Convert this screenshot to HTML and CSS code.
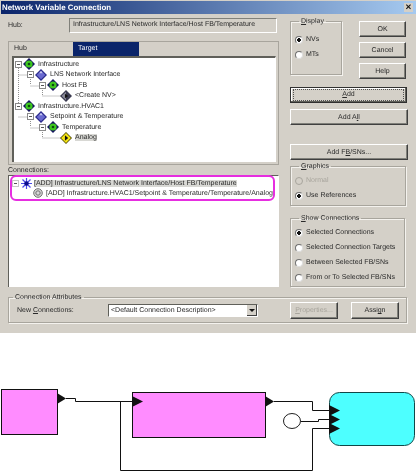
FILE: index.html
```html
<!doctype html>
<html lang="en">
<head>
    <title>Network Variable Connection</title>
    <meta charset="utf-8" />
    <link rel="stylesheet" href="styles.css">
</head>
<body>
    <!-- Shared tree icons -->
    <svg class="icon-defs" width="0" height="0">
        <symbol id="node-green" viewBox="0 0 11 11">
            <polygon points="5.5,0 11,5.5 5.5,11 0,5.5" fill="#14145e" />
            <circle cx="5.5" cy="5.5" r="3.3" fill="#3ec81e" />
            <circle cx="5.5" cy="5.5" r="1.2" fill="#0c4a10" />
        </symbol>
        <symbol id="node-blue" viewBox="0 0 11 11">
            <polygon points="5.5,0 11,5.5 5.5,11 0,5.5" fill="#2a2a8c" />
            <polygon points="5.5,1.5 9.5,5.5 5.5,9.5 1.5,5.5" fill="#6a6ad0" />
            <polygon points="5.5,1.5 7,4 4,4" fill="#c8c8f0" />
        </symbol>
        <symbol id="node-gray" viewBox="0 0 11 11">
            <polygon points="5.5,0 11,5.5 5.5,11 0,5.5" fill="#3a3a50" />
            <polygon points="1.5,5.5 5.5,1.5 5.5,9.5" fill="#8a8a9a" />
            <polygon points="4.5,3.5 7.5,5.5 4.5,7.5" fill="#111" />
        </symbol>
        <symbol id="node-yellow" viewBox="0 0 11 11">
            <polygon points="5.5,0 11,5.5 5.5,11 0,5.5" fill="#4a4400" />
            <polygon points="5.5,1 10,5.5 5.5,10 1,5.5" fill="#f4e414" />
            <polygon points="4.5,3 7.5,5.5 4.5,8" fill="#111" />
        </symbol>
    </svg>

    <!-- Dialog -->
    <div class="dialog">
        <div class="titlebar">
            <span class="title">Network Variable Connection</span>
            <span class="close">&#215;</span>
        </div>

        <div class="main">
            <div class="left">
                <div class="hub-row">
                    <span class="hub-label">Hub:</span>
                    <div class="hub-field">Infrastructure/LNS Network Interface/Host FB/Temperature</div>
                </div>

                <div class="pane">
                    <div class="tabs">
                        <div class="tab">Hub</div>
                        <div class="tab tab-active">Target</div>
                    </div>
                    <div class="tree">
                        <svg class="tree-lines" width="260" height="100">
                            <path d="M4.5 5V47M4.5 16H13M16.5 16V26M16.5 27H25M28.5 27V37H47M4.5 58H13M16.5 58V68M16.5 69H25M28.5 69V79H47" />
                        </svg>
                        <div class="row lvl0"><span class="toggle"></span><svg class="node"><use href="#node-green" /></svg><span>Infrastructure</span></div>
                        <div class="row lvl1"><span class="toggle"></span><svg class="node"><use href="#node-blue" /></svg><span>LNS Network Interface</span></div>
                        <div class="row lvl2"><span class="toggle"></span><svg class="node"><use href="#node-green" /></svg><span>Host FB</span></div>
                        <div class="row lvl3"><svg class="node"><use href="#node-gray" /></svg><span>&lt;Create NV&gt;</span></div>
                        <div class="row lvl0"><span class="toggle"></span><svg class="node"><use href="#node-green" /></svg><span>Infrastructure.HVAC1</span></div>
                        <div class="row lvl1"><span class="toggle"></span><svg class="node"><use href="#node-blue" /></svg><span>Setpoint &amp; Temperature</span></div>
                        <div class="row lvl2"><span class="toggle"></span><svg class="node"><use href="#node-green" /></svg><span>Temperature</span></div>
                        <div class="row lvl3"><svg class="node"><use href="#node-yellow" /></svg><span class="picked">Analog</span></div>
                    </div>
                </div>

                <div class="conn-label">Connections:</div>
                <div class="conn-list">
                    <div class="conn-mark">
                        <div class="conn-row">
                            <span class="toggle toggle-faint"></span>
                            <svg class="star" width="11" height="11" viewBox="0 0 11 11">
                                <path d="M5.5 0V11M0 5.5H11M1.5 1.5L9.5 9.5M9.5 1.5L1.5 9.5" />
                                <circle cx="5.5" cy="5.5" r="2.2" />
                            </svg>
                            <span class="picked">[ADD] Infrastructure/LNS Network Interface/Host FB/Temperature</span>
                        </div>
                        <div class="conn-row conn-target">
                            <svg class="target" width="10" height="10" viewBox="0 0 10 10">
                                <circle cx="5" cy="5" r="4.3" />
                                <circle cx="5" cy="5" r="2.2" />
                            </svg>
                            <span>[ADD] Infrastructure.HVAC1/Setpoint &amp; Temperature/Temperature/Analog</span>
                        </div>
                    </div>
                </div>
            </div>

            <div class="right">
                <div class="top-row">
                    <fieldset class="group group-display">
                        <legend><u>D</u>isplay</legend>
                        <div class="radio on">NVs</div>
                        <div class="radio">MTs</div>
                    </fieldset>
                    <div class="stack">
                        <div class="btn btn-small">OK</div>
                        <div class="btn btn-small">Cancel</div>
                        <div class="btn btn-small">Help</div>
                    </div>
                </div>
                <div class="btn btn-default"><span><u>A</u>dd</span></div>
                <div class="btn btn-wide btn-all">Add A<u>l</u>l</div>
                <div class="btn btn-wide btn-fb">Add F<u>B</u>/SNs...</div>

                <fieldset class="group group-graphics">
                    <legend><u>G</u>raphics</legend>
                    <div class="radio off">Normal</div>
                    <div class="radio on">Use References</div>
                </fieldset>

                <fieldset class="group group-show">
                    <legend><u>S</u>how Connections</legend>
                    <div class="radio on">Selected Connections</div>
                    <div class="radio">Selected Connection Targets</div>
                    <div class="radio">Between Selected FB/SNs</div>
                    <div class="radio">From or To Selected FB/SNs</div>
                </fieldset>
            </div>
        </div>

        <fieldset class="group group-attrs">
            <legend>Connection Attributes</legend>
            <div class="attrs">
                <span class="attrs-label">New <u>C</u>onnections:</span>
                <div class="combo">
                    <span class="combo-text">&lt;Default Connection Description&gt;</span>
                    <span class="combo-arrow"></span>
                </div>
                <div class="btn btn-attr btn-off"><span><u>P</u>roperties...</span></div>
                <div class="btn btn-attr">Assi<u>g</u>n</div>
            </div>
        </fieldset>
    </div>

    <!-- Block diagram -->
    <svg class="diagram" width="416" height="139" viewBox="0 333 416 139">
        <rect class="pink" x="1.5" y="389.5" width="56" height="45" />
        <rect class="pink" x="132.5" y="392.5" width="133" height="45" />
        <rect class="cyan" x="329.5" y="392.5" width="85" height="53" rx="10" />
        <path class="wire" d="M66 398.5H75.5V401.5H132M120.5 401.5V470.5H312.5V428.5H329M274 401.5H312.5V410.5H329M301 421.5H318.5V419.5H329" />
        <ellipse class="node-open" cx="292" cy="421" rx="8.5" ry="7.5" />
        <polygon class="pin" points="57,393 66,398.5 57,404" />
        <polygon class="pin" points="132,396 143,401.5 132,407" />
        <polygon class="pin" points="265,396 274,401.5 265,407" />
        <polygon class="pin" points="329,405 340,410.5 329,416" />
        <polygon class="pin" points="329,414 340,419.5 329,425" />
        <polygon class="pin" points="329,423 340,428.5 329,434" />
    </svg>
</body>
</html>
```

FILE: styles.css
```css
body {
    margin: 0;
    background-color: white;
    font-family: 'Liberation Sans', Arial, sans-serif;
    font-size: 7px;
    color: #2a2a2a;
    overflow: hidden;
    white-space: nowrap;
    text-rendering: geometricPrecision;
}

.icon-defs {
    display: block;
    height: 0;
}

/* Dialog */
.dialog {
    height: 333px;
    box-sizing: border-box;
    padding-top: 1px;
    background-color: #d4d0c8;
    filter: blur(0.3px);
}

.titlebar {
    height: 13px;
    margin-left: 1px;
    display: flex;
    align-items: center;
    justify-content: space-between;
    background: linear-gradient(to right, #0a246a, #a6caf0);
    color: white;
}

.title {
    margin-left: 1px;
    font-size: 7.9px;
    font-weight: bold;
}

.close {
    width: 9px;
    height: 9px;
    margin-right: 3px;
    background-color: #d4d0c8;
    color: #111;
    font-size: 10px;
    font-weight: bold;
    line-height: 9px;
    text-align: center;
}

.main {
    display: flex;
    gap: 11px;
    padding-left: 8px;
}

.left {
    width: 271px;
    flex: none;
}

.hub-row {
    display: flex;
    align-items: center;
    margin-top: 4px;
    height: 15px;
}

.hub-label {
    width: 61px;
    flex: none;
}

.hub-field {
    width: 208px;
    height: 15px;
    box-sizing: border-box;
    padding-left: 3px;
    line-height: 11px;
    border-top: 1px solid #80807a;
    border-left: 1px solid #80807a;
    border-right: 1px solid #fff;
    border-bottom: 1px solid #fff;
}

/* Tabs and tree */
.pane {
    margin-top: 8px;
    height: 124px;
    box-sizing: border-box;
    border-top: 1px solid #fff;
    border-left: 1px solid #fff;
    border-right: 1px solid #80807a;
    outline: 1px solid #a8a59d;
    outline-offset: -1px;
}

.tabs {
    display: flex;
    height: 14px;
}

.tab {
    width: 64px;
    padding-left: 5px;
    box-sizing: border-box;
    line-height: 13px;
}

.tab-active {
    width: 66px;
    background-color: #0a246a;
    color: white;
}

.tree {
    position: relative;
    width: 264px;
    height: 106px;
    box-sizing: border-box;
    margin-left: 3px;
    padding-top: 1px;
    background-color: white;
    border-top: 2px solid #60605a;
    border-left: 2px solid #60605a;
    border-right: 1px solid #fff;
}

.tree-lines {
    position: absolute;
    top: 1px;
    left: 0;
}

.tree-lines path {
    fill: none;
    stroke: #909090;
    stroke-width: 1;
    stroke-dasharray: 1 1;
}

.row {
    position: relative;
    display: flex;
    align-items: center;
    height: 10.5px;
}

.lvl0 { padding-left: 1px; }
.lvl1 { padding-left: 13px; }
.lvl2 { padding-left: 25px; }
.lvl3 { padding-left: 47px; }

.toggle {
    width: 5px;
    height: 5px;
    flex: none;
    margin-right: 2px;
    border: 1px solid #8a8a8a;
    background: linear-gradient(#555, #555) center / 3px 1px no-repeat, white;
}

.toggle-faint {
    border-color: #c8c8c8;
}

.node {
    width: 12px;
    height: 12px;
    flex: none;
    margin: 0 3px 0 -1px;
}

.picked {
    background-color: #d8d8d4;
}

/* Connections list */
.conn-label {
    height: 11px;
    line-height: 11px;
}

.conn-list {
    height: 112px;
    box-sizing: border-box;
    background-color: white;
    border-top: 1px solid #60605a;
    border-left: 1px solid #60605a;
    border-right: 1px solid #fff;
    margin-top: -1px;
}

.conn-mark {
    width: 265px;
    height: 26px;
    box-sizing: border-box;
    margin: -1px 0 0 1px;
    padding-top: 1px;
    border: 2px solid #e62ee0;
    border-radius: 6px;
}

.conn-row {
    display: flex;
    align-items: center;
    height: 10px;
}

.conn-target {
    padding-left: 21px;
}

.star {
    flex: none;
    margin-right: 2px;
}

.star path {
    stroke: #4a4ae8;
    stroke-width: 1.2;
    fill: none;
}

.star circle {
    fill: #0a0a8c;
}

.target {
    flex: none;
    margin-right: 3px;
}

.target circle {
    fill: #d8d8d8;
    stroke: #707070;
    stroke-width: 1;
}

/* Right column */
.right {
    width: 118px;
    flex: none;
}

.top-row {
    display: flex;
    gap: 17px;
    margin-top: 3px;
}

.stack {
    display: flex;
    flex-direction: column;
    gap: 5px;
    margin-top: 4px;
}

.group {
    margin: 0;
    padding: 0;
    border: 1px solid #a8a59d;
    box-shadow: 1px 1px 0 #f4f2ee, inset 1px 1px 0 #f4f2ee;
    min-width: 0;
}

.group legend {
    margin-left: 4px;
    padding: 0 2px;
    height: 9px;
    line-height: 9px;
}

.group-display {
    width: 52px;
    height: 58px;
    box-sizing: border-box;
    padding: 6px 0 0 4px;
}

.group-graphics {
    width: 116px;
    height: 44px;
    box-sizing: border-box;
    margin-top: 2px;
    padding: 2px 0 0 4px;
}

.group-show {
    width: 115px;
    height: 73px;
    box-sizing: border-box;
    margin-top: 8px;
    padding: 2px 0 0 4px;
}

.radio {
    position: relative;
    display: flex;
    align-items: center;
    gap: 3px;
    height: 15px;
}

.radio::before {
    content: "";
    width: 8px;
    height: 8px;
    box-sizing: border-box;
    flex: none;
    border-radius: 50%;
    background-color: white;
    border: 1px solid #707070;
    border-right-color: #ddd;
    border-bottom-color: #ddd;
}

.radio.on::before {
    background: radial-gradient(circle, #111 0 1.6px, white 1.9px);
}

.radio.off {
    color: #a8a59d;
}

.radio.off::before {
    background-color: #d4d0c8;
    border-color: #a8a59d;
}

.btn {
    box-sizing: border-box;
    display: flex;
    align-items: center;
    justify-content: center;
    background-color: #d4d0c8;
    border-top: 1px solid #fff;
    border-left: 1px solid #fff;
    border-right: 1px solid #404040;
    border-bottom: 1px solid #404040;
    box-shadow: inset -1px -1px 0 #80807a;
}

.btn-small {
    width: 47px;
    height: 16px;
}

.btn-wide {
    width: 118px;
    height: 16px;
}

.btn-default {
    width: 117px;
    height: 16px;
    margin-top: 8px;
    border: 1px solid #303030;
    box-shadow: inset -1px -1px 0 #60605a, inset 1px 1px 0 #fff;
}

.btn-default span {
    width: 109px;
    height: 10px;
    line-height: 10px;
    text-align: center;
    border: 1px dotted #505050;
}

.btn-all {
    margin-top: 6px;
}

.btn-fb {
    margin-top: 19px;
}

/* Bottom group */
.group-attrs {
    width: 399px;
    height: 30px;
    box-sizing: border-box;
    margin: 6px 0 0 8px;
}

.attrs {
    display: flex;
    align-items: center;
    height: 17px;
}

.attrs-label {
    width: 91px;
    margin-left: 8px;
    flex: none;
}

.combo {
    width: 150px;
    height: 13px;
    box-sizing: border-box;
    flex: none;
    display: flex;
    align-items: center;
    justify-content: space-between;
    background-color: white;
    border-top: 1px solid #60605a;
    border-left: 1px solid #60605a;
    border-right: 1px solid #fff;
    border-bottom: 1px solid #fff;
}

.combo-text {
    margin-left: 2px;
}

.combo-arrow {
    position: relative;
    width: 10px;
    height: 11px;
    background-color: #d4d0c8;
    border-right: 1px solid #404040;
    border-bottom: 1px solid #404040;
    box-sizing: border-box;
    display: flex;
    align-items: center;
    justify-content: center;
}

.combo-arrow::after {
    content: "";
    border-top: 3px solid #111;
    border-left: 3px solid transparent;
    border-right: 3px solid transparent;
}

.btn-attr {
    width: 48px;
    height: 17px;
    flex: none;
    margin-right: 13px;
}

.combo + .btn-attr {
    margin-left: 32px;
}

.btn-off {
    color: #a8a59d;
}

/* Block diagram */
.diagram {
    display: block;
}

.pink {
    fill: #ff8cff;
    stroke: #111;
    stroke-width: 1;
}

.cyan {
    fill: #4dffff;
    stroke: #104848;
    stroke-width: 1;
}

.wire {
    fill: none;
    stroke: #111;
    stroke-width: 1;
}

.node-open {
    fill: white;
    stroke: #222;
    stroke-width: 1;
}

.pin {
    fill: #111;
}
```
